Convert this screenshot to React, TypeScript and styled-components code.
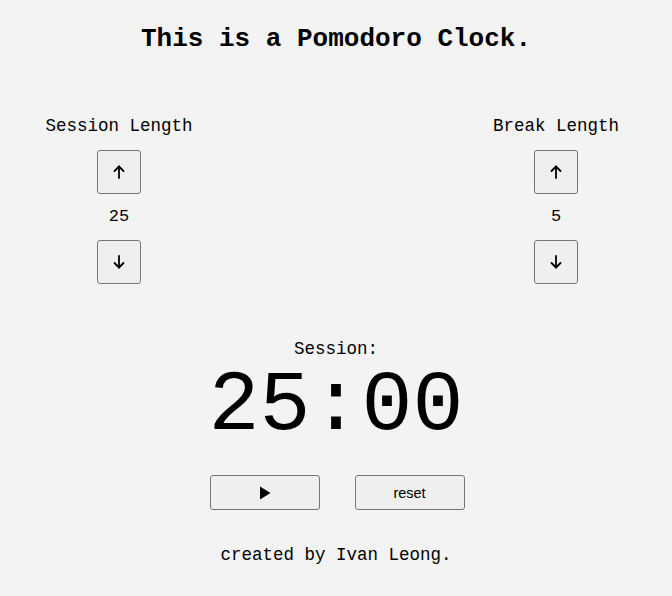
import { createGlobalStyle, styled } from "styled-components";

const GlobalStyle = createGlobalStyle`
  html, body {
    margin: 0;
    padding: 0;
    background: #f3f3f3;
  }
  body {
    font-family: "Liberation Mono", "Courier New", monospace;
    color: #000;
  }
`;

const Page = styled.div`
  width: 672px;
  height: 596px;
  display: flex;
  flex-direction: column;
  align-items: center;
`;

const Title = styled.h1`
  margin: 24px 0 0;
  font-size: 26px;
  line-height: 30px;
  font-weight: bold;
`;

const Controls = styled.div`
  align-self: stretch;
  display: flex;
  justify-content: space-between;
  padding: 0 35px 0 38px;
  margin-top: 62px;
`;

const Control = styled.div`
  width: 162px;
  display: flex;
  flex-direction: column;
  align-items: center;
`;

const Label = styled.div`
  font-size: 17.5px;
  line-height: 20px;
`;

const Value = styled.div`
  font-size: 17px;
  line-height: 20px;
  margin: 13px 0;
`;

const ArrowButton = styled.button<{ $top?: number }>`
  width: 44px;
  height: 44px;
  padding: 0;
  display: flex;
  align-items: center;
  justify-content: center;
  background: #efefef;
  border: 1px solid #767676;
  border-radius: 3px;
  margin-top: ${(p) => p.$top ?? 0}px;
`;

const Timer = styled.div`
  margin-top: 55px;
  display: flex;
  flex-direction: column;
  align-items: center;
`;

const TimerLabel = styled.div`
  font-size: 17.5px;
  line-height: 20px;
`;

const Time = styled.div`
  font-size: 85px;
  line-height: 96px;
`;

const Actions = styled.div`
  display: flex;
  gap: 35px;
  margin-top: 20px;
  padding-left: 2px;
`;

const ActionButton = styled.button`
  width: 110px;
  height: 35px;
  display: flex;
  align-items: center;
  justify-content: center;
  background: #efefef;
  border: 1px solid #767676;
  border-radius: 3px;
  font-family: "Liberation Sans", Arial, sans-serif;
  font-size: 14.5px;
  color: #000;
`;

const Footer = styled.div`
  margin-top: 35px;
  font-size: 17.5px;
  line-height: 20px;
`;

const Arrow = ({ down }: { down?: boolean }) => (
  <svg width="14" height="14" viewBox="0 0 14 14" fill="none">
    <g
      stroke="#000"
      strokeWidth="1.8"
      strokeLinecap="round"
      strokeLinejoin="round"
      transform={down ? "rotate(180 7 7)" : undefined}
    >
      <path d="M7 13V1.5" />
      <path d="M2.5 6L7 1.5L11.5 6" />
    </g>
  </svg>
);

const PlayIcon = () => (
  <svg width="12" height="14" viewBox="0 0 12 14">
    <path d="M1 0.5L11.5 7L1 13.5Z" fill="#000" />
  </svg>
);

const LengthControl = ({ label, value }: { label: string; value: number }) => (
  <Control>
    <Label>{label}</Label>
    <ArrowButton $top={14}>
      <Arrow />
    </ArrowButton>
    <Value>{value}</Value>
    <ArrowButton>
      <Arrow down />
    </ArrowButton>
  </Control>
);

export default function App() {
  return (
    <>
      <GlobalStyle />
      <Page>
        <Title>This is a Pomodoro Clock.</Title>
        <Controls>
          <LengthControl label="Session Length" value={25} />
          <LengthControl label="Break Length" value={5} />
        </Controls>
        <Timer>
          <TimerLabel>Session:</TimerLabel>
          <Time>25:00</Time>
          <Actions>
            <ActionButton>
              <PlayIcon />
            </ActionButton>
            <ActionButton>reset</ActionButton>
          </Actions>
        </Timer>
        <Footer>created by Ivan Leong.</Footer>
      </Page>
    </>
  );
}
